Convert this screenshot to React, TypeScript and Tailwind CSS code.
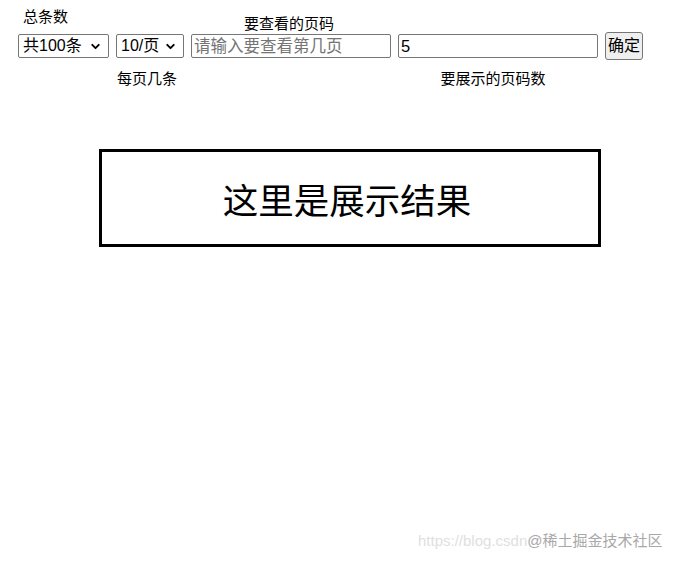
import { ChevronDown } from "lucide-react";

const FONT = { fontFamily: '"Liberation Sans", "Noto Sans CJK SC", sans-serif' };

function FakeSelect({ value, width }: { value: string; width: string }) {
  return (
    <div className={`relative h-[24px] ${width}`}>
      <select
        defaultValue={value}
        className="h-full w-full appearance-none rounded-[2px] border border-[#767676] bg-white pl-[4px] text-[16px] leading-[22px] text-black outline-none"
      >
        <option>{value}</option>
      </select>
      <ChevronDown
        size={13}
        strokeWidth={3.5}
        className="pointer-events-none absolute right-[7px] top-[6px] text-black"
      />
    </div>
  );
}

export default function App() {
  return (
    <div className="relative h-[563px] w-[675px] overflow-hidden bg-white text-black" style={FONT}>
      <div className="flex items-start gap-[7px] pl-[18px]">
        {/* 总条数 */}
        <div className="flex flex-col">
          <div className="flex h-[34px] items-start pl-[5px] pt-[6px] text-[15px] leading-[21px]">总条数</div>
          <FakeSelect value="共100条" width="w-[91px]" />
        </div>

        {/* 每页几条 */}
        <div className="flex flex-col items-center">
          <div className="h-[34px]" />
          <FakeSelect value="10/页" width="w-[68px]" />
          <div className="mr-[6px] mt-[10px] text-[15px] leading-[21px]">每页几条</div>
        </div>

        {/* 要查看的页码 */}
        <div className="flex flex-col items-center">
          <div className="mr-[4px] flex h-[34px] items-start pt-[13px] text-[15px] leading-[21px]">要查看的页码</div>
          <input
            placeholder="请输入要查看第几页"
            className="h-[24px] w-[200px] rounded-[2px] border border-[#767676] px-[2px] text-[16.5px] text-black outline-none placeholder:text-[#757575]"
          />
        </div>

        {/* 要展示的页码数 */}
        <div className="flex flex-col items-center">
          <div className="h-[34px]" />
          <input
            defaultValue="5"
            className="h-[24px] w-[200px] rounded-[2px] border border-[#767676] px-[2px] text-[16.5px] text-black outline-none"
          />
          <div className="mr-[10px] mt-[10px] text-[15px] leading-[21px]">要展示的页码数</div>
        </div>

        {/* 确定 */}
        <div className="flex flex-col">
          <div className="h-[32px]" />
          <button className="h-[28px] w-[38px] rounded-[3px] border border-[#767676] bg-[#efefef] text-[16px] leading-[24px] text-black">
            确定
          </button>
        </div>
      </div>

      <div className="ml-[99px] mt-[60px] flex h-[98px] w-[502px] items-center justify-center border-[3px] border-black pr-[6px] pt-[10px] text-[35.5px]">
        这里是展示结果
      </div>

      {/* watermark */}
      <div className="absolute bottom-[12px] left-[418px] flex items-center text-[15px] leading-[20px]">
        <span className="text-[#e0e0e0]">https://blog.csdn</span>
        <span className="text-[#a8a8a8]">@稀土掘金技术社区</span>
      </div>
    </div>
  );
}
